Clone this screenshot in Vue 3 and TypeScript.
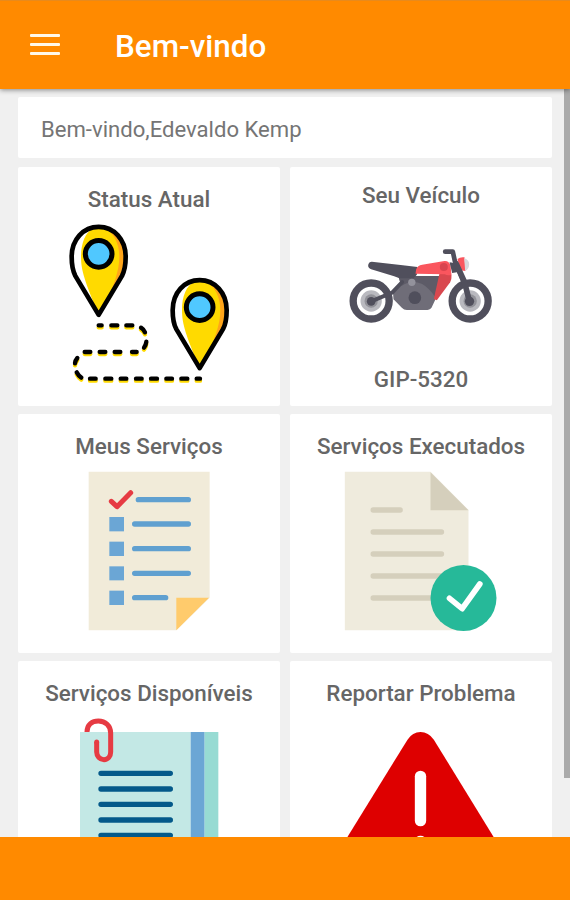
<script setup lang="ts">
import { ref } from 'vue'

const pageTitle = ref<string>('Bem-vindo')
const userName = ref<string>('Edevaldo Kemp')
const plate = ref<string>('GIP-5320')
</script>

<template>
  <div class="screen">
    <header class="bar">
      <button class="menu" aria-label="Menu">
        <span></span><span></span><span></span>
      </button>
      <h1>{{ pageTitle }}</h1>
    </header>

    <div class="body">
      <main class="content">
        <section class="card welcome">Bem-vindo,{{ userName }}</section>

        <div class="grid">
          <section class="card tile">
            <h2>Status Atual</h2>
            <svg class="art" viewBox="-3 -6 600 540">
              <defs>
                <g id="pin">
                  <path fill="#ffda00" d="M146 298 L76 181 C67 164 65 145 65 124 C65 72 100 34 146 34 S227 72 227 124 C227 145 225 164 216 181 Z" />
                  <path fill="#fff" d="M146 298 L76 181 C67 164 65 145 65 124 C65 77 95 38 133 36 C105 50 93 84 93 124 C93 165 105 200 146 298 Z" />
                  <path fill="#ffa51a" d="M160 274 L216 181 C225 164 227 145 227 124 C227 77 198 38 160 36 C190 50 208 82 208 124 C208 168 190 215 160 274 Z" />
                  <path class="ink" stroke-width="14" d="M146 298 L76 181 C67 164 65 145 65 124 C65 72 100 34 146 34 S227 72 227 124 C227 145 225 164 216 181 Z" />
                  <circle cx="146" cy="115" r="40" fill="#50c8ff" stroke="#000" stroke-width="15" />
                </g>
                <path id="route" d="M146 330 h9 M184 330 h18 M229 330 h18 M273 337 q8 5 12 14 M289 379 q-1 9 -7 18 M260 410 h-14 M211 410 h-17 M166 410 h-17 M121 410 h-17 M82 428 q-6 7 -7 16 M80 471 q5 10 14 16 M120 490 h17 M166 490 h18 M212 490 h17 M258 490 h17 M303 490 h18 M349 490 h17 M394 490 h18 M440 490 h10" />
              </defs>
              <use href="#pin" y="1.500" />
              <use href="#pin" x="303" y="161.500" />
              <use href="#route" class="dash glow" y="7" />
              <use href="#route" class="dash" y="1" />
            </svg>
          </section>

          <section class="card tile vehicle">
            <h2>Seu Veículo</h2>
            <svg class="art moto" viewBox="-55.5 -93 600 471">
              <g fill="none">
                <circle cx="95" cy="183" r="54" stroke="#504f5c" stroke-width="22" />
                <circle cx="392" cy="183" r="54" stroke="#504f5c" stroke-width="22" />
              </g>
              <circle cx="95" cy="183" r="32" fill="#b9b9bf" />
              <circle cx="95" cy="183" r="20" fill="#929299" />
              <circle cx="392" cy="183" r="32" fill="#b9b9bf" />
              <circle cx="392" cy="183" r="20" fill="#929299" />
              <path fill="#6f6d78" d="M178 110 H300 L288 178 L276 203 Q271 210 258 210 H202 Q193 210 187 203 L162 178 L160 150 L184 136 Z" />
              <path fill="#5d5b67" d="M176 108 H302 L286 170 Q270 145 248 132 Q215 118 186 138 Z" />
              <path stroke="#504f5c" stroke-width="12" stroke-linecap="round" d="M95 184 L158 158 L188 126" fill="none" />
              <circle cx="95" cy="184" r="13" fill="#504f5c" />
              <path fill="#504f5c" d="M97 65 L190 76 L234 81 L232 104 L222 115 H180 L164 109 L95 88 Q85 84 86 75 Q88 65 97 65 Z" />
              <circle cx="217" cy="127" r="11" fill="#93929c" />
              <circle cx="226" cy="173" r="19" fill="#504f5c" />
              <path fill="#d9484f" d="M300 100 L336 104 Q337 119 332 127 L292 181 L283 177 Z" />
              <path fill="#fa565e" d="M228 101 L230 88 Q234 76 248 74 L315 63 Q329 62 333 77 L336 104 Q326 108 316 103 Z" />
              <circle cx="313" cy="81" r="12" fill="#d9454f" />
              <path fill="#504f5c" d="M330 67 L350 70 L357 96 L338 99 Z" />
              <path fill="#fa565e" d="M354 57 Q362 50 375 52 L378 93 L362 91 Z" />
              <path fill="#d8d8dc" d="M374 54 Q390 61 389 74 Q388 88 377 92 Z" />
              <path fill="none" stroke="#504f5c" stroke-width="14" stroke-linecap="round" stroke-linejoin="round" d="M317 35 H340 L346 63 L374 130" />
              <path fill="none" stroke="#504f5c" stroke-width="17" stroke-linecap="round" d="M350 71 L375 126 L389 181" />
              <circle cx="390" cy="184" r="14" fill="#504f5c" />
            </svg>
            <p class="plate">{{ plate }}</p>
          </section>

          <section class="card tile">
            <h2>Meus Serviços</h2>
            <svg class="art" viewBox="-63 0 600 540">
              <path fill="#f1ebd9" d="M56 35 H419 V413 L319 511 H56 Z" />
              <path fill="#ffcb6c" d="M319 413 H417 L319 511 Z" />
              <path fill="none" stroke="#e63b43" stroke-width="15" stroke-linecap="round" stroke-linejoin="round" d="M124 124 L141 140 L182 98" />
              <g fill="#6ba6d5">
                <rect x="118" y="171" width="44" height="43" />
                <rect x="118" y="245" width="44" height="43" />
                <rect x="118" y="319" width="44" height="42" />
                <rect x="118" y="392" width="44" height="43" />
              </g>
              <path class="rule" stroke="#60a0d0" d="M205 119 H355 M194 192 H355 M194 266 H355 M194 340 H355 M194 413 H287" />
            </svg>
          </section>

          <section class="card tile">
            <h2>Serviços Executados</h2>
            <svg class="art" viewBox="-40.5 0 600 540">
              <path fill="#efebdd" d="M31 35 H288 L402 150 V511 H31 Z" />
              <path fill="#d5cfbc" d="M288 37 L402 151 H288 Z" />
              <path class="rule" stroke="#d5cfbc" d="M116 150 H197 M116 216 H321 M116 282 H321 M116 348 H321 M116 414 H321" />
              <circle cx="387" cy="414" r="99" fill="#26b999" />
              <path fill="none" stroke="#fff" stroke-width="17" stroke-linecap="round" stroke-linejoin="round" d="M345 415 L383 446 L436 372" />
            </svg>
          </section>

          <section class="card tile">
            <h2>Serviços Disponíveis</h2>
            <svg class="art" viewBox="117 201 600 540">
              <path fill="#c3e8e5" d="M210 276 H542 V710 H210 Z" />
              <path fill="#6ba6d5" d="M542 276 H584 V710 H542 Z" />
              <path fill="#97dbd3" d="M584 276 H625 V710 H584 Z" />
              <path fill="none" stroke="#e63b43" stroke-width="15" d="M231 276 C231 253 247 243 265 243 C286 243 302 257 302 279 V336 C302 349 294 359 282 359 C270 359 260 349 260 336 V306" />
              <circle cx="260" cy="306" r="7.500" fill="#e63b43" />
              <path class="rule" stroke="#04598a" d="M273 400 H481 M273 447 H481 M273 493 H481 M273 540 H481 M273 586 H481" />
            </svg>
          </section>

          <section class="card tile">
            <h2>Reportar Problema</h2>
            <svg class="art" viewBox="124.5 201 600 540">
              <path fill="#de0000" d="M384 299 Q399 276 423 276 Q447 276 463 299 L683 657 Q700 700 655 705 H191 Q146 700 163 657 Z" />
              <path stroke="#fff" stroke-width="34" stroke-linecap="round" d="M423 409 V542" />
              <circle cx="423" cy="606" r="19" fill="#fff" />
            </svg>
          </section>
        </div>
      </main>
      <div class="track"><div class="thumb"></div></div>
    </div>

    <footer class="foot"></footer>
  </div>
</template>

<style>
body {
  margin: 0;
  overflow: hidden;
}
</style>

<style scoped>
.screen {
  width: 570px;
  height: 900px;
  display: flex;
  flex-direction: column;
  overflow: hidden;
  background: #f0f0f0;
  font-family: Roboto, 'Liberation Sans', sans-serif;
  color: #666;
}
.bar {
  flex: 0 0 89px;
  box-sizing: border-box;
  display: flex;
  align-items: center;
  padding: 0 30px;
  gap: 55px;
  background: #ff8a00;
  border-top: 1px solid #e88a1c;
  box-shadow: 0 1px 5px rgba(0, 0, 0, 0.45);
  z-index: 1;
}
.menu {
  width: 30px;
  margin-bottom: 1px;
  padding: 0;
  border: 0;
  background: none;
  display: flex;
  flex-direction: column;
  gap: 6px;
}
.menu span {
  height: 3px;
  border-radius: 1px;
  background: #fff8ea;
}
h1 {
  margin: 3px 0 0;
  font-size: 31.400px;
  line-height: 36px;
  font-weight: 500;
  color: #fff;
}
.body {
  flex: 1;
  min-height: 0;
  display: flex;
  overflow: hidden;
}
.content {
  flex: 1;
  padding: 8px 12px 0 18px;
}
.card {
  background: #fff;
  border-radius: 2px;
}
.welcome {
  height: 61px;
  margin-bottom: 9px;
  padding-left: 23px;
  font-size: 22.100px;
  line-height: 64px;
  color: #757575;
}
.grid {
  display: grid;
  grid-template-columns: 262px 262px;
  grid-auto-rows: 239px;
  gap: 8px 10px;
}
.tile {
  box-sizing: border-box;
  padding-top: 19px;
  display: flex;
  flex-direction: column;
  align-items: center;
}
.vehicle {
  padding-top: 15px;
}
h2,
.plate {
  margin: 0;
  font-size: 22.400px;
  line-height: 26px;
  font-weight: 500;
  white-space: nowrap;
}
h2 {
  margin-bottom: 1px;
}
.art {
  display: block;
  flex: none;
  width: 200px;
  height: 180px;
}
.moto {
  height: 157px;
}
.ink {
  fill: none;
  stroke: #000;
  stroke-linejoin: round;
}
.dash {
  fill: none;
  stroke: #000;
  stroke-width: 13;
  stroke-linecap: round;
}
.glow {
  stroke: #ffda00;
}
.rule {
  fill: none;
  stroke-width: 16;
  stroke-linecap: round;
}
.track {
  width: 6px;
}
.thumb {
  height: 689px;
  background: #aaa;
}
.foot {
  flex: 0 0 63px;
  background: #ff8a00;
}
</style>
